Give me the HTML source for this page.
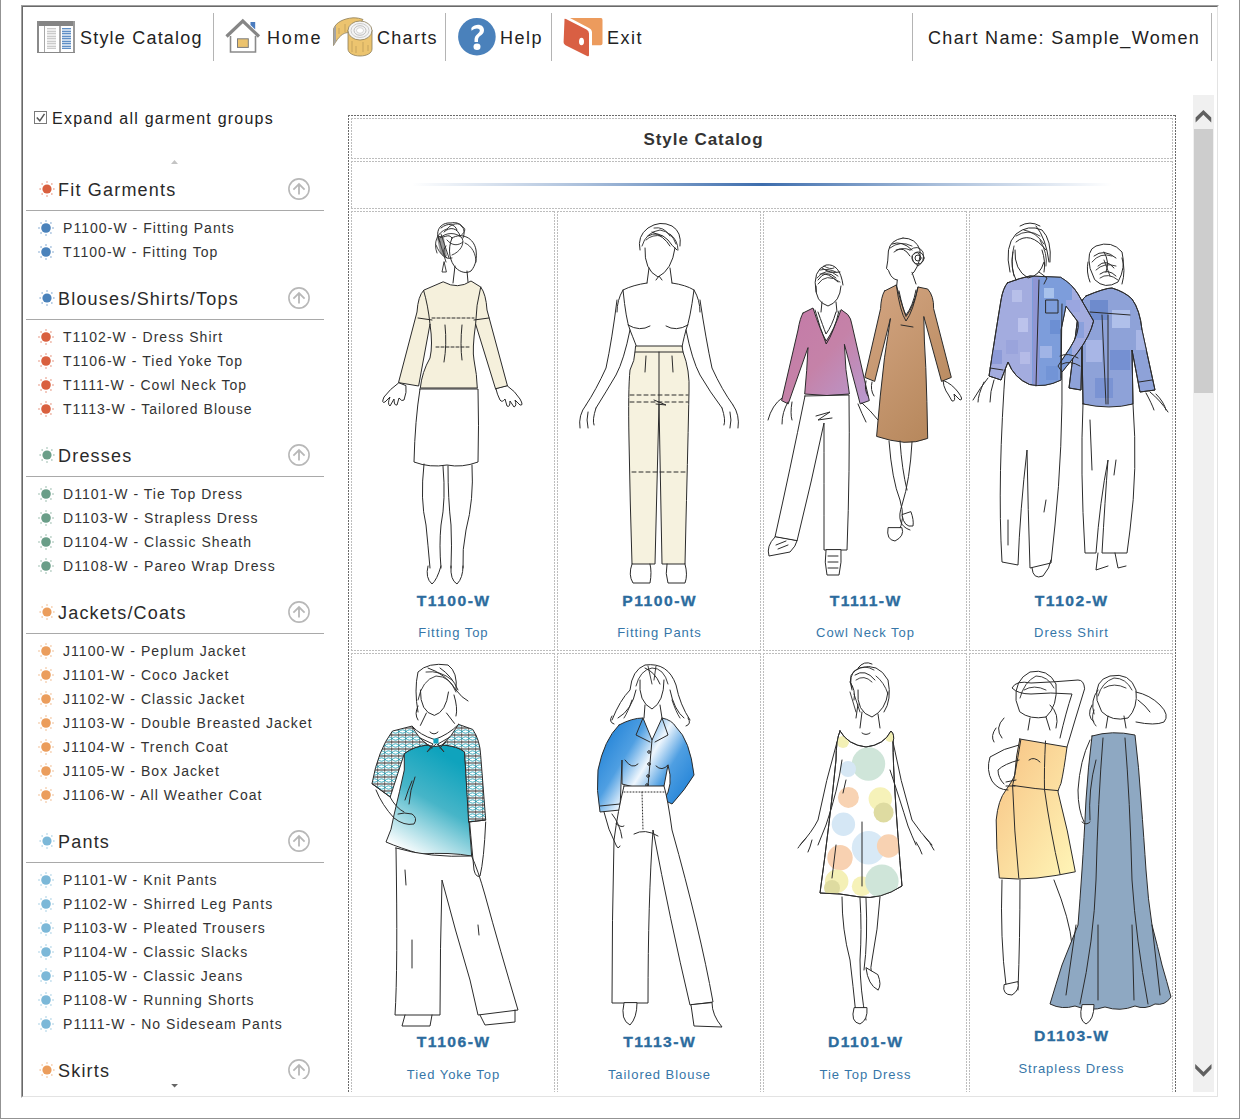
<!DOCTYPE html>
<html><head><meta charset="utf-8">
<style>
*{box-sizing:border-box}
html,body{margin:0;padding:0;width:1240px;height:1119px;overflow:hidden;background:#fff;font-family:"Liberation Sans",sans-serif;color:#222}
.a{position:absolute;white-space:nowrap;line-height:1}
#outer{position:absolute;left:0;top:-1px;width:1240px;height:1120px;border:1px solid #939393;border-top:0}
#inner{position:absolute;left:21px;top:5px;width:1198px;height:1093px;border-top:1px solid #a0a0a0;border-left:1px solid #a0a0a0;border-right:1px solid #fff;border-bottom:1px solid #fff}
#inner2{position:absolute;left:0;top:0;right:0;bottom:0;border-top:1px solid #696969;border-left:1px solid #696969;border-right:1px solid #e3e3e3;border-bottom:1px solid #e3e3e3}
.sep{position:absolute;top:13px;width:1px;height:48px;background:#b4b4b4}
.tb{font-size:18px;top:29px}
.hdr{font-size:18px;letter-spacing:1.2px;color:#2a2a2a}
.it{font-size:14px;letter-spacing:1.05px;color:#333}
.divl{position:absolute;left:26px;width:298px;height:1px;background:#a9a9a9}
.code{font-size:14px;font-weight:bold;color:#2c6c9e;text-align:center;letter-spacing:1.3px;padding-left:1.3px;transform:scaleX(1.12);transform-origin:50% 0;-webkit-text-stroke:0.3px #2c6c9e}
.nm{font-size:13px;color:#3676a8;text-align:center;letter-spacing:0.95px;padding-left:0.95px}
</style></head><body>
<div id="outer"></div>
<div id="inner"><div id="inner2"></div></div>

<!-- toolbar -->
<svg class="abs" style="position:absolute;left:0;top:0" width="1240" height="70" viewBox="0 0 1240 70">
 <!-- style catalog icon -->
 <g shape-rendering="crispEdges">
  <rect x="37" y="21" width="38" height="32" fill="#fff"/>
  <rect x="37" y="21" width="38" height="5" fill="#858585"/>
  <rect x="37" y="21" width="2" height="32" fill="#8a8a8a"/>
  <rect x="73" y="21" width="2" height="32" fill="#9a9a9a"/>
  <rect x="37" y="52" width="38" height="1" fill="#888"/>
  <rect x="44" y="26" width="1" height="26" fill="#a8a8a8"/>
  <rect x="59" y="26" width="2" height="26" fill="#a8a8a8"/>
  <rect x="47" y="28" width="9" height="21" fill="#ececec"/>
  <rect x="62" y="28" width="9" height="21" fill="#c5d7ea"/>
 </g>
 <g fill="#cbcbcb" shape-rendering="crispEdges">
  <rect x="47" y="28" width="9" height="1"/><rect x="47" y="31" width="9" height="1"/><rect x="47" y="33" width="9" height="1"/><rect x="47" y="36" width="9" height="1"/><rect x="47" y="38" width="9" height="1"/><rect x="47" y="41" width="9" height="1"/><rect x="47" y="43" width="9" height="1"/><rect x="47" y="46" width="9" height="1"/><rect x="47" y="48" width="9" height="1"/>
 </g>
 <g fill="#5f8fc6" shape-rendering="crispEdges">
  <rect x="62" y="28" width="9" height="1"/><rect x="62" y="31" width="9" height="1"/><rect x="62" y="33" width="9" height="1"/><rect x="62" y="36" width="9" height="1"/><rect x="62" y="38" width="9" height="1"/><rect x="62" y="41" width="9" height="1"/><rect x="62" y="43" width="9" height="1"/><rect x="62" y="46" width="9" height="1"/><rect x="62" y="48" width="9" height="1"/>
 </g>
 <!-- home -->
 <path d="M250.5 22 H255.2 V29.5 L250.5 25 Z" fill="#4a7cbf"/>
 <path d="M230.5 36 V52 H255.5 V36" fill="#fff" stroke="#8a8a8a" stroke-width="1.6"/>
 <path d="M226.5 36.5 L242.8 21 L259 36.5" fill="none" stroke="#868686" stroke-width="3.2" stroke-linejoin="miter"/>
 <rect x="237.5" y="38.8" width="10.8" height="8.6" fill="#ecc36e" stroke="#7c7c7c" stroke-width="1"/>
 <!-- tape -->
 <path d="M333.5 29 C336 22 344 18.5 353 17.8 C357 17.8 360 18.3 363 19.5 L356 29 C352 31 350 32 347.7 32.6 C343 33 339 36 333.5 45.5 Z" fill="#ecc46f" stroke="#8c7c58" stroke-width="0.8"/><path d="M333.5 29 L336 25.5 L336 41 L333.5 45.5 Z" fill="#a4a4a4"/>
 <path d="M348 30 V49 C348 53 353 56 360 56 C367 56 372 53 372 49 V30 Z" fill="#ecc46f" stroke="#8c7c58" stroke-width="0.8"/>
 <ellipse cx="360" cy="30.5" rx="12" ry="9.5" fill="#f4f4f4" stroke="#8c7c58" stroke-width="0.8"/>
 <ellipse cx="360" cy="30.5" rx="9" ry="7" fill="none" stroke="#c0c0c0" stroke-width="0.8"/>
 <ellipse cx="360" cy="30.5" rx="6" ry="4.8" fill="none" stroke="#b0b0b0" stroke-width="0.8"/>
 <ellipse cx="360" cy="30.5" rx="3.5" ry="2.8" fill="#fff" stroke="#bbb" stroke-width="0.6"/>
 <g stroke="#b89a58" stroke-width="0.7"><path d="M352 41 V52 M356 46 V53 M363 42 V52 M368 45 V51 M339 28 V34 M345 24 V32"/></g>
 <!-- help -->
 <circle cx="476.9" cy="36.7" r="18.8" fill="#4a81bb"/>
 <path d="M471.3 28 C473 25.5 476 24.8 478 24.8 C481.5 24.8 484 27 484 30.2 C484 33 482 34.5 480 36 C478.5 37.2 478 38.5 478 40.5 V42 H474.5 V40 C474.5 37 475.5 35.5 477.5 34 C479 32.8 479.8 31.8 479.8 30.6 C479.8 29.2 478.6 28.4 477 28.4 C475.2 28.4 473.5 29.2 471.5 30.8 Z" fill="#fff"/>
 <ellipse cx="477" cy="46.8" rx="3.5" ry="3.2" fill="#fff"/>
 <!-- exit -->
 <path d="M570 18 H601 Q602.5 18 602.5 20 V43.5 Q602.5 45.3 600.5 45.3 H592 V32.5 Q592 29 588 27.5 Z" fill="#ec9b5d"/>
 <path d="M564.5 19.5 Q564 18.3 566 19 L586.5 29.5 Q589 31 589 33.5 V55 Q589 57 587 56 L567 46 Q563.6 44.5 563.6 42 Z" fill="#d95f43"/>
 <ellipse cx="581.5" cy="41.5" rx="2.5" ry="3.8" fill="#fff"/>
</svg>
<div class="sep" style="left:213px"></div>
<div class="sep" style="left:445px"></div>
<div class="sep" style="left:551px"></div>
<div class="sep" style="left:912px"></div>
<div class="sep" style="left:1211px"></div>
<div class="a tb" style="left:80px;letter-spacing:1.2px">Style Catalog</div>
<div class="a tb" style="left:267px;letter-spacing:1.85px">Home</div>
<div class="a tb" style="left:377px;letter-spacing:1.3px">Charts</div>
<div class="a tb" style="left:500px;letter-spacing:1.5px">Help</div>
<div class="a tb" style="left:607px;letter-spacing:1.5px">Exit</div>
<div class="a tb" style="left:928px;letter-spacing:1.35px">Chart Name: Sample_Women</div>

<!-- left panel -->
<svg style="position:absolute;left:0;top:0" width="340" height="1119" viewBox="0 0 340 1119">
<circle cx="47" cy="189" r="4.6" fill="#d9603f"/><circle cx="53.90" cy="189.00" r="0.75" fill="#d9603f" opacity="0.8"/><circle cx="51.88" cy="193.88" r="0.75" fill="#d9603f" opacity="0.8"/><circle cx="47.00" cy="195.90" r="0.75" fill="#d9603f" opacity="0.8"/><circle cx="42.12" cy="193.88" r="0.75" fill="#d9603f" opacity="0.8"/><circle cx="40.10" cy="189.00" r="0.75" fill="#d9603f" opacity="0.8"/><circle cx="42.12" cy="184.12" r="0.75" fill="#d9603f" opacity="0.8"/><circle cx="47.00" cy="182.10" r="0.75" fill="#d9603f" opacity="0.8"/><circle cx="51.88" cy="184.12" r="0.75" fill="#d9603f" opacity="0.8"/>
<circle cx="299" cy="189" r="10.1" fill="none" stroke="#b8b8b8" stroke-width="1.6"/><path d="M299 194.6 V184 M293.4 189.6 L299 184 L304.6 189.6" transform="translate(0,0)" fill="none" stroke="#b8b8b8" stroke-width="1.8"/>
<rect x="26" y="210" width="298" height="1" fill="#a9a9a9"/>
<circle cx="46" cy="228" r="4.8" fill="#4a82bb"/><circle cx="53.00" cy="228.00" r="0.75" fill="#4a82bb" opacity="0.8"/><circle cx="50.95" cy="232.95" r="0.75" fill="#4a82bb" opacity="0.8"/><circle cx="46.00" cy="235.00" r="0.75" fill="#4a82bb" opacity="0.8"/><circle cx="41.05" cy="232.95" r="0.75" fill="#4a82bb" opacity="0.8"/><circle cx="39.00" cy="228.00" r="0.75" fill="#4a82bb" opacity="0.8"/><circle cx="41.05" cy="223.05" r="0.75" fill="#4a82bb" opacity="0.8"/><circle cx="46.00" cy="221.00" r="0.75" fill="#4a82bb" opacity="0.8"/><circle cx="50.95" cy="223.05" r="0.75" fill="#4a82bb" opacity="0.8"/>
<circle cx="46" cy="252" r="4.8" fill="#4a82bb"/><circle cx="53.00" cy="252.00" r="0.75" fill="#4a82bb" opacity="0.8"/><circle cx="50.95" cy="256.95" r="0.75" fill="#4a82bb" opacity="0.8"/><circle cx="46.00" cy="259.00" r="0.75" fill="#4a82bb" opacity="0.8"/><circle cx="41.05" cy="256.95" r="0.75" fill="#4a82bb" opacity="0.8"/><circle cx="39.00" cy="252.00" r="0.75" fill="#4a82bb" opacity="0.8"/><circle cx="41.05" cy="247.05" r="0.75" fill="#4a82bb" opacity="0.8"/><circle cx="46.00" cy="245.00" r="0.75" fill="#4a82bb" opacity="0.8"/><circle cx="50.95" cy="247.05" r="0.75" fill="#4a82bb" opacity="0.8"/>
<circle cx="47" cy="298" r="4.6" fill="#4a82bb"/><circle cx="53.90" cy="298.00" r="0.75" fill="#4a82bb" opacity="0.8"/><circle cx="51.88" cy="302.88" r="0.75" fill="#4a82bb" opacity="0.8"/><circle cx="47.00" cy="304.90" r="0.75" fill="#4a82bb" opacity="0.8"/><circle cx="42.12" cy="302.88" r="0.75" fill="#4a82bb" opacity="0.8"/><circle cx="40.10" cy="298.00" r="0.75" fill="#4a82bb" opacity="0.8"/><circle cx="42.12" cy="293.12" r="0.75" fill="#4a82bb" opacity="0.8"/><circle cx="47.00" cy="291.10" r="0.75" fill="#4a82bb" opacity="0.8"/><circle cx="51.88" cy="293.12" r="0.75" fill="#4a82bb" opacity="0.8"/>
<circle cx="299" cy="298" r="10.1" fill="none" stroke="#b8b8b8" stroke-width="1.6"/><path d="M299 194.6 V184 M293.4 189.6 L299 184 L304.6 189.6" transform="translate(0,109)" fill="none" stroke="#b8b8b8" stroke-width="1.8"/>
<rect x="26" y="319" width="298" height="1" fill="#a9a9a9"/>
<circle cx="46" cy="337" r="4.8" fill="#d9603f"/><circle cx="53.00" cy="337.00" r="0.75" fill="#d9603f" opacity="0.8"/><circle cx="50.95" cy="341.95" r="0.75" fill="#d9603f" opacity="0.8"/><circle cx="46.00" cy="344.00" r="0.75" fill="#d9603f" opacity="0.8"/><circle cx="41.05" cy="341.95" r="0.75" fill="#d9603f" opacity="0.8"/><circle cx="39.00" cy="337.00" r="0.75" fill="#d9603f" opacity="0.8"/><circle cx="41.05" cy="332.05" r="0.75" fill="#d9603f" opacity="0.8"/><circle cx="46.00" cy="330.00" r="0.75" fill="#d9603f" opacity="0.8"/><circle cx="50.95" cy="332.05" r="0.75" fill="#d9603f" opacity="0.8"/>
<circle cx="46" cy="361" r="4.8" fill="#d9603f"/><circle cx="53.00" cy="361.00" r="0.75" fill="#d9603f" opacity="0.8"/><circle cx="50.95" cy="365.95" r="0.75" fill="#d9603f" opacity="0.8"/><circle cx="46.00" cy="368.00" r="0.75" fill="#d9603f" opacity="0.8"/><circle cx="41.05" cy="365.95" r="0.75" fill="#d9603f" opacity="0.8"/><circle cx="39.00" cy="361.00" r="0.75" fill="#d9603f" opacity="0.8"/><circle cx="41.05" cy="356.05" r="0.75" fill="#d9603f" opacity="0.8"/><circle cx="46.00" cy="354.00" r="0.75" fill="#d9603f" opacity="0.8"/><circle cx="50.95" cy="356.05" r="0.75" fill="#d9603f" opacity="0.8"/>
<circle cx="46" cy="385" r="4.8" fill="#d9603f"/><circle cx="53.00" cy="385.00" r="0.75" fill="#d9603f" opacity="0.8"/><circle cx="50.95" cy="389.95" r="0.75" fill="#d9603f" opacity="0.8"/><circle cx="46.00" cy="392.00" r="0.75" fill="#d9603f" opacity="0.8"/><circle cx="41.05" cy="389.95" r="0.75" fill="#d9603f" opacity="0.8"/><circle cx="39.00" cy="385.00" r="0.75" fill="#d9603f" opacity="0.8"/><circle cx="41.05" cy="380.05" r="0.75" fill="#d9603f" opacity="0.8"/><circle cx="46.00" cy="378.00" r="0.75" fill="#d9603f" opacity="0.8"/><circle cx="50.95" cy="380.05" r="0.75" fill="#d9603f" opacity="0.8"/>
<circle cx="46" cy="409" r="4.8" fill="#d9603f"/><circle cx="53.00" cy="409.00" r="0.75" fill="#d9603f" opacity="0.8"/><circle cx="50.95" cy="413.95" r="0.75" fill="#d9603f" opacity="0.8"/><circle cx="46.00" cy="416.00" r="0.75" fill="#d9603f" opacity="0.8"/><circle cx="41.05" cy="413.95" r="0.75" fill="#d9603f" opacity="0.8"/><circle cx="39.00" cy="409.00" r="0.75" fill="#d9603f" opacity="0.8"/><circle cx="41.05" cy="404.05" r="0.75" fill="#d9603f" opacity="0.8"/><circle cx="46.00" cy="402.00" r="0.75" fill="#d9603f" opacity="0.8"/><circle cx="50.95" cy="404.05" r="0.75" fill="#d9603f" opacity="0.8"/>
<circle cx="47" cy="455" r="4.6" fill="#6a9e88"/><circle cx="53.90" cy="455.00" r="0.75" fill="#6a9e88" opacity="0.8"/><circle cx="51.88" cy="459.88" r="0.75" fill="#6a9e88" opacity="0.8"/><circle cx="47.00" cy="461.90" r="0.75" fill="#6a9e88" opacity="0.8"/><circle cx="42.12" cy="459.88" r="0.75" fill="#6a9e88" opacity="0.8"/><circle cx="40.10" cy="455.00" r="0.75" fill="#6a9e88" opacity="0.8"/><circle cx="42.12" cy="450.12" r="0.75" fill="#6a9e88" opacity="0.8"/><circle cx="47.00" cy="448.10" r="0.75" fill="#6a9e88" opacity="0.8"/><circle cx="51.88" cy="450.12" r="0.75" fill="#6a9e88" opacity="0.8"/>
<circle cx="299" cy="455" r="10.1" fill="none" stroke="#b8b8b8" stroke-width="1.6"/><path d="M299 194.6 V184 M293.4 189.6 L299 184 L304.6 189.6" transform="translate(0,266)" fill="none" stroke="#b8b8b8" stroke-width="1.8"/>
<rect x="26" y="476" width="298" height="1" fill="#a9a9a9"/>
<circle cx="46" cy="494" r="4.8" fill="#6a9e88"/><circle cx="53.00" cy="494.00" r="0.75" fill="#6a9e88" opacity="0.8"/><circle cx="50.95" cy="498.95" r="0.75" fill="#6a9e88" opacity="0.8"/><circle cx="46.00" cy="501.00" r="0.75" fill="#6a9e88" opacity="0.8"/><circle cx="41.05" cy="498.95" r="0.75" fill="#6a9e88" opacity="0.8"/><circle cx="39.00" cy="494.00" r="0.75" fill="#6a9e88" opacity="0.8"/><circle cx="41.05" cy="489.05" r="0.75" fill="#6a9e88" opacity="0.8"/><circle cx="46.00" cy="487.00" r="0.75" fill="#6a9e88" opacity="0.8"/><circle cx="50.95" cy="489.05" r="0.75" fill="#6a9e88" opacity="0.8"/>
<circle cx="46" cy="518" r="4.8" fill="#6a9e88"/><circle cx="53.00" cy="518.00" r="0.75" fill="#6a9e88" opacity="0.8"/><circle cx="50.95" cy="522.95" r="0.75" fill="#6a9e88" opacity="0.8"/><circle cx="46.00" cy="525.00" r="0.75" fill="#6a9e88" opacity="0.8"/><circle cx="41.05" cy="522.95" r="0.75" fill="#6a9e88" opacity="0.8"/><circle cx="39.00" cy="518.00" r="0.75" fill="#6a9e88" opacity="0.8"/><circle cx="41.05" cy="513.05" r="0.75" fill="#6a9e88" opacity="0.8"/><circle cx="46.00" cy="511.00" r="0.75" fill="#6a9e88" opacity="0.8"/><circle cx="50.95" cy="513.05" r="0.75" fill="#6a9e88" opacity="0.8"/>
<circle cx="46" cy="542" r="4.8" fill="#6a9e88"/><circle cx="53.00" cy="542.00" r="0.75" fill="#6a9e88" opacity="0.8"/><circle cx="50.95" cy="546.95" r="0.75" fill="#6a9e88" opacity="0.8"/><circle cx="46.00" cy="549.00" r="0.75" fill="#6a9e88" opacity="0.8"/><circle cx="41.05" cy="546.95" r="0.75" fill="#6a9e88" opacity="0.8"/><circle cx="39.00" cy="542.00" r="0.75" fill="#6a9e88" opacity="0.8"/><circle cx="41.05" cy="537.05" r="0.75" fill="#6a9e88" opacity="0.8"/><circle cx="46.00" cy="535.00" r="0.75" fill="#6a9e88" opacity="0.8"/><circle cx="50.95" cy="537.05" r="0.75" fill="#6a9e88" opacity="0.8"/>
<circle cx="46" cy="566" r="4.8" fill="#6a9e88"/><circle cx="53.00" cy="566.00" r="0.75" fill="#6a9e88" opacity="0.8"/><circle cx="50.95" cy="570.95" r="0.75" fill="#6a9e88" opacity="0.8"/><circle cx="46.00" cy="573.00" r="0.75" fill="#6a9e88" opacity="0.8"/><circle cx="41.05" cy="570.95" r="0.75" fill="#6a9e88" opacity="0.8"/><circle cx="39.00" cy="566.00" r="0.75" fill="#6a9e88" opacity="0.8"/><circle cx="41.05" cy="561.05" r="0.75" fill="#6a9e88" opacity="0.8"/><circle cx="46.00" cy="559.00" r="0.75" fill="#6a9e88" opacity="0.8"/><circle cx="50.95" cy="561.05" r="0.75" fill="#6a9e88" opacity="0.8"/>
<circle cx="47" cy="612" r="4.6" fill="#eb9d5c"/><circle cx="53.90" cy="612.00" r="0.75" fill="#eb9d5c" opacity="0.8"/><circle cx="51.88" cy="616.88" r="0.75" fill="#eb9d5c" opacity="0.8"/><circle cx="47.00" cy="618.90" r="0.75" fill="#eb9d5c" opacity="0.8"/><circle cx="42.12" cy="616.88" r="0.75" fill="#eb9d5c" opacity="0.8"/><circle cx="40.10" cy="612.00" r="0.75" fill="#eb9d5c" opacity="0.8"/><circle cx="42.12" cy="607.12" r="0.75" fill="#eb9d5c" opacity="0.8"/><circle cx="47.00" cy="605.10" r="0.75" fill="#eb9d5c" opacity="0.8"/><circle cx="51.88" cy="607.12" r="0.75" fill="#eb9d5c" opacity="0.8"/>
<circle cx="299" cy="612" r="10.1" fill="none" stroke="#b8b8b8" stroke-width="1.6"/><path d="M299 194.6 V184 M293.4 189.6 L299 184 L304.6 189.6" transform="translate(0,423)" fill="none" stroke="#b8b8b8" stroke-width="1.8"/>
<rect x="26" y="633" width="298" height="1" fill="#a9a9a9"/>
<circle cx="46" cy="651" r="4.8" fill="#eb9d5c"/><circle cx="53.00" cy="651.00" r="0.75" fill="#eb9d5c" opacity="0.8"/><circle cx="50.95" cy="655.95" r="0.75" fill="#eb9d5c" opacity="0.8"/><circle cx="46.00" cy="658.00" r="0.75" fill="#eb9d5c" opacity="0.8"/><circle cx="41.05" cy="655.95" r="0.75" fill="#eb9d5c" opacity="0.8"/><circle cx="39.00" cy="651.00" r="0.75" fill="#eb9d5c" opacity="0.8"/><circle cx="41.05" cy="646.05" r="0.75" fill="#eb9d5c" opacity="0.8"/><circle cx="46.00" cy="644.00" r="0.75" fill="#eb9d5c" opacity="0.8"/><circle cx="50.95" cy="646.05" r="0.75" fill="#eb9d5c" opacity="0.8"/>
<circle cx="46" cy="675" r="4.8" fill="#eb9d5c"/><circle cx="53.00" cy="675.00" r="0.75" fill="#eb9d5c" opacity="0.8"/><circle cx="50.95" cy="679.95" r="0.75" fill="#eb9d5c" opacity="0.8"/><circle cx="46.00" cy="682.00" r="0.75" fill="#eb9d5c" opacity="0.8"/><circle cx="41.05" cy="679.95" r="0.75" fill="#eb9d5c" opacity="0.8"/><circle cx="39.00" cy="675.00" r="0.75" fill="#eb9d5c" opacity="0.8"/><circle cx="41.05" cy="670.05" r="0.75" fill="#eb9d5c" opacity="0.8"/><circle cx="46.00" cy="668.00" r="0.75" fill="#eb9d5c" opacity="0.8"/><circle cx="50.95" cy="670.05" r="0.75" fill="#eb9d5c" opacity="0.8"/>
<circle cx="46" cy="699" r="4.8" fill="#eb9d5c"/><circle cx="53.00" cy="699.00" r="0.75" fill="#eb9d5c" opacity="0.8"/><circle cx="50.95" cy="703.95" r="0.75" fill="#eb9d5c" opacity="0.8"/><circle cx="46.00" cy="706.00" r="0.75" fill="#eb9d5c" opacity="0.8"/><circle cx="41.05" cy="703.95" r="0.75" fill="#eb9d5c" opacity="0.8"/><circle cx="39.00" cy="699.00" r="0.75" fill="#eb9d5c" opacity="0.8"/><circle cx="41.05" cy="694.05" r="0.75" fill="#eb9d5c" opacity="0.8"/><circle cx="46.00" cy="692.00" r="0.75" fill="#eb9d5c" opacity="0.8"/><circle cx="50.95" cy="694.05" r="0.75" fill="#eb9d5c" opacity="0.8"/>
<circle cx="46" cy="723" r="4.8" fill="#eb9d5c"/><circle cx="53.00" cy="723.00" r="0.75" fill="#eb9d5c" opacity="0.8"/><circle cx="50.95" cy="727.95" r="0.75" fill="#eb9d5c" opacity="0.8"/><circle cx="46.00" cy="730.00" r="0.75" fill="#eb9d5c" opacity="0.8"/><circle cx="41.05" cy="727.95" r="0.75" fill="#eb9d5c" opacity="0.8"/><circle cx="39.00" cy="723.00" r="0.75" fill="#eb9d5c" opacity="0.8"/><circle cx="41.05" cy="718.05" r="0.75" fill="#eb9d5c" opacity="0.8"/><circle cx="46.00" cy="716.00" r="0.75" fill="#eb9d5c" opacity="0.8"/><circle cx="50.95" cy="718.05" r="0.75" fill="#eb9d5c" opacity="0.8"/>
<circle cx="46" cy="747" r="4.8" fill="#eb9d5c"/><circle cx="53.00" cy="747.00" r="0.75" fill="#eb9d5c" opacity="0.8"/><circle cx="50.95" cy="751.95" r="0.75" fill="#eb9d5c" opacity="0.8"/><circle cx="46.00" cy="754.00" r="0.75" fill="#eb9d5c" opacity="0.8"/><circle cx="41.05" cy="751.95" r="0.75" fill="#eb9d5c" opacity="0.8"/><circle cx="39.00" cy="747.00" r="0.75" fill="#eb9d5c" opacity="0.8"/><circle cx="41.05" cy="742.05" r="0.75" fill="#eb9d5c" opacity="0.8"/><circle cx="46.00" cy="740.00" r="0.75" fill="#eb9d5c" opacity="0.8"/><circle cx="50.95" cy="742.05" r="0.75" fill="#eb9d5c" opacity="0.8"/>
<circle cx="46" cy="771" r="4.8" fill="#eb9d5c"/><circle cx="53.00" cy="771.00" r="0.75" fill="#eb9d5c" opacity="0.8"/><circle cx="50.95" cy="775.95" r="0.75" fill="#eb9d5c" opacity="0.8"/><circle cx="46.00" cy="778.00" r="0.75" fill="#eb9d5c" opacity="0.8"/><circle cx="41.05" cy="775.95" r="0.75" fill="#eb9d5c" opacity="0.8"/><circle cx="39.00" cy="771.00" r="0.75" fill="#eb9d5c" opacity="0.8"/><circle cx="41.05" cy="766.05" r="0.75" fill="#eb9d5c" opacity="0.8"/><circle cx="46.00" cy="764.00" r="0.75" fill="#eb9d5c" opacity="0.8"/><circle cx="50.95" cy="766.05" r="0.75" fill="#eb9d5c" opacity="0.8"/>
<circle cx="46" cy="795" r="4.8" fill="#eb9d5c"/><circle cx="53.00" cy="795.00" r="0.75" fill="#eb9d5c" opacity="0.8"/><circle cx="50.95" cy="799.95" r="0.75" fill="#eb9d5c" opacity="0.8"/><circle cx="46.00" cy="802.00" r="0.75" fill="#eb9d5c" opacity="0.8"/><circle cx="41.05" cy="799.95" r="0.75" fill="#eb9d5c" opacity="0.8"/><circle cx="39.00" cy="795.00" r="0.75" fill="#eb9d5c" opacity="0.8"/><circle cx="41.05" cy="790.05" r="0.75" fill="#eb9d5c" opacity="0.8"/><circle cx="46.00" cy="788.00" r="0.75" fill="#eb9d5c" opacity="0.8"/><circle cx="50.95" cy="790.05" r="0.75" fill="#eb9d5c" opacity="0.8"/>
<circle cx="47" cy="841" r="4.6" fill="#7cb8d8"/><circle cx="53.90" cy="841.00" r="0.75" fill="#7cb8d8" opacity="0.8"/><circle cx="51.88" cy="845.88" r="0.75" fill="#7cb8d8" opacity="0.8"/><circle cx="47.00" cy="847.90" r="0.75" fill="#7cb8d8" opacity="0.8"/><circle cx="42.12" cy="845.88" r="0.75" fill="#7cb8d8" opacity="0.8"/><circle cx="40.10" cy="841.00" r="0.75" fill="#7cb8d8" opacity="0.8"/><circle cx="42.12" cy="836.12" r="0.75" fill="#7cb8d8" opacity="0.8"/><circle cx="47.00" cy="834.10" r="0.75" fill="#7cb8d8" opacity="0.8"/><circle cx="51.88" cy="836.12" r="0.75" fill="#7cb8d8" opacity="0.8"/>
<circle cx="299" cy="841" r="10.1" fill="none" stroke="#b8b8b8" stroke-width="1.6"/><path d="M299 194.6 V184 M293.4 189.6 L299 184 L304.6 189.6" transform="translate(0,652)" fill="none" stroke="#b8b8b8" stroke-width="1.8"/>
<rect x="26" y="862" width="298" height="1" fill="#a9a9a9"/>
<circle cx="46" cy="880" r="4.8" fill="#7cb8d8"/><circle cx="53.00" cy="880.00" r="0.75" fill="#7cb8d8" opacity="0.8"/><circle cx="50.95" cy="884.95" r="0.75" fill="#7cb8d8" opacity="0.8"/><circle cx="46.00" cy="887.00" r="0.75" fill="#7cb8d8" opacity="0.8"/><circle cx="41.05" cy="884.95" r="0.75" fill="#7cb8d8" opacity="0.8"/><circle cx="39.00" cy="880.00" r="0.75" fill="#7cb8d8" opacity="0.8"/><circle cx="41.05" cy="875.05" r="0.75" fill="#7cb8d8" opacity="0.8"/><circle cx="46.00" cy="873.00" r="0.75" fill="#7cb8d8" opacity="0.8"/><circle cx="50.95" cy="875.05" r="0.75" fill="#7cb8d8" opacity="0.8"/>
<circle cx="46" cy="904" r="4.8" fill="#7cb8d8"/><circle cx="53.00" cy="904.00" r="0.75" fill="#7cb8d8" opacity="0.8"/><circle cx="50.95" cy="908.95" r="0.75" fill="#7cb8d8" opacity="0.8"/><circle cx="46.00" cy="911.00" r="0.75" fill="#7cb8d8" opacity="0.8"/><circle cx="41.05" cy="908.95" r="0.75" fill="#7cb8d8" opacity="0.8"/><circle cx="39.00" cy="904.00" r="0.75" fill="#7cb8d8" opacity="0.8"/><circle cx="41.05" cy="899.05" r="0.75" fill="#7cb8d8" opacity="0.8"/><circle cx="46.00" cy="897.00" r="0.75" fill="#7cb8d8" opacity="0.8"/><circle cx="50.95" cy="899.05" r="0.75" fill="#7cb8d8" opacity="0.8"/>
<circle cx="46" cy="928" r="4.8" fill="#7cb8d8"/><circle cx="53.00" cy="928.00" r="0.75" fill="#7cb8d8" opacity="0.8"/><circle cx="50.95" cy="932.95" r="0.75" fill="#7cb8d8" opacity="0.8"/><circle cx="46.00" cy="935.00" r="0.75" fill="#7cb8d8" opacity="0.8"/><circle cx="41.05" cy="932.95" r="0.75" fill="#7cb8d8" opacity="0.8"/><circle cx="39.00" cy="928.00" r="0.75" fill="#7cb8d8" opacity="0.8"/><circle cx="41.05" cy="923.05" r="0.75" fill="#7cb8d8" opacity="0.8"/><circle cx="46.00" cy="921.00" r="0.75" fill="#7cb8d8" opacity="0.8"/><circle cx="50.95" cy="923.05" r="0.75" fill="#7cb8d8" opacity="0.8"/>
<circle cx="46" cy="952" r="4.8" fill="#7cb8d8"/><circle cx="53.00" cy="952.00" r="0.75" fill="#7cb8d8" opacity="0.8"/><circle cx="50.95" cy="956.95" r="0.75" fill="#7cb8d8" opacity="0.8"/><circle cx="46.00" cy="959.00" r="0.75" fill="#7cb8d8" opacity="0.8"/><circle cx="41.05" cy="956.95" r="0.75" fill="#7cb8d8" opacity="0.8"/><circle cx="39.00" cy="952.00" r="0.75" fill="#7cb8d8" opacity="0.8"/><circle cx="41.05" cy="947.05" r="0.75" fill="#7cb8d8" opacity="0.8"/><circle cx="46.00" cy="945.00" r="0.75" fill="#7cb8d8" opacity="0.8"/><circle cx="50.95" cy="947.05" r="0.75" fill="#7cb8d8" opacity="0.8"/>
<circle cx="46" cy="976" r="4.8" fill="#7cb8d8"/><circle cx="53.00" cy="976.00" r="0.75" fill="#7cb8d8" opacity="0.8"/><circle cx="50.95" cy="980.95" r="0.75" fill="#7cb8d8" opacity="0.8"/><circle cx="46.00" cy="983.00" r="0.75" fill="#7cb8d8" opacity="0.8"/><circle cx="41.05" cy="980.95" r="0.75" fill="#7cb8d8" opacity="0.8"/><circle cx="39.00" cy="976.00" r="0.75" fill="#7cb8d8" opacity="0.8"/><circle cx="41.05" cy="971.05" r="0.75" fill="#7cb8d8" opacity="0.8"/><circle cx="46.00" cy="969.00" r="0.75" fill="#7cb8d8" opacity="0.8"/><circle cx="50.95" cy="971.05" r="0.75" fill="#7cb8d8" opacity="0.8"/>
<circle cx="46" cy="1000" r="4.8" fill="#7cb8d8"/><circle cx="53.00" cy="1000.00" r="0.75" fill="#7cb8d8" opacity="0.8"/><circle cx="50.95" cy="1004.95" r="0.75" fill="#7cb8d8" opacity="0.8"/><circle cx="46.00" cy="1007.00" r="0.75" fill="#7cb8d8" opacity="0.8"/><circle cx="41.05" cy="1004.95" r="0.75" fill="#7cb8d8" opacity="0.8"/><circle cx="39.00" cy="1000.00" r="0.75" fill="#7cb8d8" opacity="0.8"/><circle cx="41.05" cy="995.05" r="0.75" fill="#7cb8d8" opacity="0.8"/><circle cx="46.00" cy="993.00" r="0.75" fill="#7cb8d8" opacity="0.8"/><circle cx="50.95" cy="995.05" r="0.75" fill="#7cb8d8" opacity="0.8"/>
<circle cx="46" cy="1024" r="4.8" fill="#7cb8d8"/><circle cx="53.00" cy="1024.00" r="0.75" fill="#7cb8d8" opacity="0.8"/><circle cx="50.95" cy="1028.95" r="0.75" fill="#7cb8d8" opacity="0.8"/><circle cx="46.00" cy="1031.00" r="0.75" fill="#7cb8d8" opacity="0.8"/><circle cx="41.05" cy="1028.95" r="0.75" fill="#7cb8d8" opacity="0.8"/><circle cx="39.00" cy="1024.00" r="0.75" fill="#7cb8d8" opacity="0.8"/><circle cx="41.05" cy="1019.05" r="0.75" fill="#7cb8d8" opacity="0.8"/><circle cx="46.00" cy="1017.00" r="0.75" fill="#7cb8d8" opacity="0.8"/><circle cx="50.95" cy="1019.05" r="0.75" fill="#7cb8d8" opacity="0.8"/>
<circle cx="47" cy="1070" r="4.6" fill="#eb9d5c"/><circle cx="53.90" cy="1070.00" r="0.75" fill="#eb9d5c" opacity="0.8"/><circle cx="51.88" cy="1074.88" r="0.75" fill="#eb9d5c" opacity="0.8"/><circle cx="47.00" cy="1076.90" r="0.75" fill="#eb9d5c" opacity="0.8"/><circle cx="42.12" cy="1074.88" r="0.75" fill="#eb9d5c" opacity="0.8"/><circle cx="40.10" cy="1070.00" r="0.75" fill="#eb9d5c" opacity="0.8"/><circle cx="42.12" cy="1065.12" r="0.75" fill="#eb9d5c" opacity="0.8"/><circle cx="47.00" cy="1063.10" r="0.75" fill="#eb9d5c" opacity="0.8"/><circle cx="51.88" cy="1065.12" r="0.75" fill="#eb9d5c" opacity="0.8"/>
<circle cx="299" cy="1070" r="10.1" fill="none" stroke="#b8b8b8" stroke-width="1.6"/><path d="M299 194.6 V184 M293.4 189.6 L299 184 L304.6 189.6" transform="translate(0,881)" fill="none" stroke="#b8b8b8" stroke-width="1.8"/>
<path d="M171 164 L174.5 160 L178 164 Z" fill="#c4c4c4"/>
<rect x="280" y="1079" width="40" height="5" fill="#fff"/><path d="M171.2 1084 L178 1084 L174.6 1087.6 Z" fill="#666"/>
<rect x="34.5" y="111.5" width="12" height="12" fill="#fff" stroke="#7a7a7a" stroke-width="1"/><path d="M36.8 117.5 L39.8 120.8 L44.5 113.8" fill="none" stroke="#555" stroke-width="1.5"/>
</svg>
<div class="a hdr" style="left:58px;top:181px">Fit Garments</div>
<div class="a it" style="left:63px;top:221px">P1100-W - Fitting Pants</div>
<div class="a it" style="left:63px;top:245px">T1100-W - Fitting Top</div>
<div class="a hdr" style="left:58px;top:290px">Blouses/Shirts/Tops</div>
<div class="a it" style="left:63px;top:330px">T1102-W - Dress Shirt</div>
<div class="a it" style="left:63px;top:354px">T1106-W - Tied Yoke Top</div>
<div class="a it" style="left:63px;top:378px">T1111-W - Cowl Neck Top</div>
<div class="a it" style="left:63px;top:402px">T1113-W - Tailored Blouse</div>
<div class="a hdr" style="left:58px;top:447px">Dresses</div>
<div class="a it" style="left:63px;top:487px">D1101-W - Tie Top Dress</div>
<div class="a it" style="left:63px;top:511px">D1103-W - Strapless Dress</div>
<div class="a it" style="left:63px;top:535px">D1104-W - Classic Sheath</div>
<div class="a it" style="left:63px;top:559px">D1108-W - Pareo Wrap Dress</div>
<div class="a hdr" style="left:58px;top:604px">Jackets/Coats</div>
<div class="a it" style="left:63px;top:644px">J1100-W - Peplum Jacket</div>
<div class="a it" style="left:63px;top:668px">J1101-W - Coco Jacket</div>
<div class="a it" style="left:63px;top:692px">J1102-W - Classic Jacket</div>
<div class="a it" style="left:63px;top:716px">J1103-W - Double Breasted Jacket</div>
<div class="a it" style="left:63px;top:740px">J1104-W - Trench Coat</div>
<div class="a it" style="left:63px;top:764px">J1105-W - Box Jacket</div>
<div class="a it" style="left:63px;top:788px">J1106-W - All Weather Coat</div>
<div class="a hdr" style="left:58px;top:833px">Pants</div>
<div class="a it" style="left:63px;top:873px">P1101-W - Knit Pants</div>
<div class="a it" style="left:63px;top:897px">P1102-W - Shirred Leg Pants</div>
<div class="a it" style="left:63px;top:921px">P1103-W - Pleated Trousers</div>
<div class="a it" style="left:63px;top:945px">P1104-W - Classic Slacks</div>
<div class="a it" style="left:63px;top:969px">P1105-W - Classic Jeans</div>
<div class="a it" style="left:63px;top:993px">P1108-W - Running Shorts</div>
<div class="a it" style="left:63px;top:1017px">P1111-W - No Sideseam Pants</div>
<div class="a hdr" style="left:58px;top:1062px">Skirts</div>
<div class="a" style="left:52px;top:111px;font-size:16px;letter-spacing:1.23px">Expand all garment groups</div>
<!-- catalog -->
<div style="position:absolute;left:340px;top:95px;width:853px;height:997px;overflow:hidden">
<div style="position:absolute;left:-340px;top:-95px;width:1240px;height:1200px">
<svg style="position:absolute;left:0;top:0" width="1240" height="1200" viewBox="0 0 1240 1200" shape-rendering="crispEdges">
<line x1="348" y1="115.5" x2="1176" y2="115.5" stroke="#6a6a6a" stroke-width="1" stroke-dasharray="2 1"/><line x1="348.5" y1="115" x2="348.5" y2="1201" stroke="#6a6a6a" stroke-width="1" stroke-dasharray="2 1"/><line x1="1175.5" y1="115" x2="1175.5" y2="1201" stroke="#6a6a6a" stroke-width="1" stroke-dasharray="2 1"/>
<line x1="351" y1="118.5" x2="1173" y2="118.5" stroke="#bdbdbd" stroke-width="1" stroke-dasharray="2 1"/><line x1="351.5" y1="118" x2="351.5" y2="159" stroke="#bdbdbd" stroke-width="1" stroke-dasharray="2 1"/><line x1="1172.5" y1="118" x2="1172.5" y2="159" stroke="#bdbdbd" stroke-width="1" stroke-dasharray="2 1"/><line x1="351" y1="158.5" x2="1173" y2="158.5" stroke="#bdbdbd" stroke-width="1" stroke-dasharray="2 1"/>
<line x1="351" y1="161.5" x2="1173" y2="161.5" stroke="#bdbdbd" stroke-width="1" stroke-dasharray="2 1"/><line x1="351.5" y1="161" x2="351.5" y2="209" stroke="#bdbdbd" stroke-width="1" stroke-dasharray="2 1"/><line x1="1172.5" y1="161" x2="1172.5" y2="209" stroke="#bdbdbd" stroke-width="1" stroke-dasharray="2 1"/><line x1="351" y1="208.5" x2="1173" y2="208.5" stroke="#bdbdbd" stroke-width="1" stroke-dasharray="2 1"/>
<line x1="351" y1="211.5" x2="555" y2="211.5" stroke="#bdbdbd" stroke-width="1" stroke-dasharray="2 1"/><line x1="351.5" y1="211" x2="351.5" y2="651" stroke="#bdbdbd" stroke-width="1" stroke-dasharray="2 1"/><line x1="554.5" y1="211" x2="554.5" y2="651" stroke="#bdbdbd" stroke-width="1" stroke-dasharray="2 1"/><line x1="351" y1="650.5" x2="555" y2="650.5" stroke="#bdbdbd" stroke-width="1" stroke-dasharray="2 1"/>
<line x1="351" y1="653.5" x2="555" y2="653.5" stroke="#bdbdbd" stroke-width="1" stroke-dasharray="2 1"/><line x1="351.5" y1="653" x2="351.5" y2="1201" stroke="#bdbdbd" stroke-width="1" stroke-dasharray="2 1"/><line x1="554.5" y1="653" x2="554.5" y2="1201" stroke="#bdbdbd" stroke-width="1" stroke-dasharray="2 1"/>
<line x1="557" y1="211.5" x2="761" y2="211.5" stroke="#bdbdbd" stroke-width="1" stroke-dasharray="2 1"/><line x1="557.5" y1="211" x2="557.5" y2="651" stroke="#bdbdbd" stroke-width="1" stroke-dasharray="2 1"/><line x1="760.5" y1="211" x2="760.5" y2="651" stroke="#bdbdbd" stroke-width="1" stroke-dasharray="2 1"/><line x1="557" y1="650.5" x2="761" y2="650.5" stroke="#bdbdbd" stroke-width="1" stroke-dasharray="2 1"/>
<line x1="557" y1="653.5" x2="761" y2="653.5" stroke="#bdbdbd" stroke-width="1" stroke-dasharray="2 1"/><line x1="557.5" y1="653" x2="557.5" y2="1201" stroke="#bdbdbd" stroke-width="1" stroke-dasharray="2 1"/><line x1="760.5" y1="653" x2="760.5" y2="1201" stroke="#bdbdbd" stroke-width="1" stroke-dasharray="2 1"/>
<line x1="763" y1="211.5" x2="967" y2="211.5" stroke="#bdbdbd" stroke-width="1" stroke-dasharray="2 1"/><line x1="763.5" y1="211" x2="763.5" y2="651" stroke="#bdbdbd" stroke-width="1" stroke-dasharray="2 1"/><line x1="966.5" y1="211" x2="966.5" y2="651" stroke="#bdbdbd" stroke-width="1" stroke-dasharray="2 1"/><line x1="763" y1="650.5" x2="967" y2="650.5" stroke="#bdbdbd" stroke-width="1" stroke-dasharray="2 1"/>
<line x1="763" y1="653.5" x2="967" y2="653.5" stroke="#bdbdbd" stroke-width="1" stroke-dasharray="2 1"/><line x1="763.5" y1="653" x2="763.5" y2="1201" stroke="#bdbdbd" stroke-width="1" stroke-dasharray="2 1"/><line x1="966.5" y1="653" x2="966.5" y2="1201" stroke="#bdbdbd" stroke-width="1" stroke-dasharray="2 1"/>
<line x1="969" y1="211.5" x2="1173" y2="211.5" stroke="#bdbdbd" stroke-width="1" stroke-dasharray="2 1"/><line x1="969.5" y1="211" x2="969.5" y2="651" stroke="#bdbdbd" stroke-width="1" stroke-dasharray="2 1"/><line x1="1172.5" y1="211" x2="1172.5" y2="651" stroke="#bdbdbd" stroke-width="1" stroke-dasharray="2 1"/><line x1="969" y1="650.5" x2="1173" y2="650.5" stroke="#bdbdbd" stroke-width="1" stroke-dasharray="2 1"/>
<line x1="969" y1="653.5" x2="1173" y2="653.5" stroke="#bdbdbd" stroke-width="1" stroke-dasharray="2 1"/><line x1="969.5" y1="653" x2="969.5" y2="1201" stroke="#bdbdbd" stroke-width="1" stroke-dasharray="2 1"/><line x1="1172.5" y1="653" x2="1172.5" y2="1201" stroke="#bdbdbd" stroke-width="1" stroke-dasharray="2 1"/>
</svg>
<div style="position:absolute;left:412px;top:183px;width:700px;height:3px;background:linear-gradient(90deg,rgba(63,111,174,0) 0%,rgba(63,111,174,0.45) 25%,#3d6dad 50%,rgba(63,111,174,0.45) 75%,rgba(63,111,174,0) 100%)"></div>
<div class="a" style="left:292px;width:822px;top:131px;text-align:center;font-size:17px;font-weight:bold;color:#333;letter-spacing:0.95px;padding-left:0.95px">Style Catalog</div>
<div class="a code" style="left:351px;width:204px;top:594px">T1100-W</div>
<div class="a nm" style="left:351px;width:204px;top:626px">Fitting Top</div>
<div class="a code" style="left:557px;width:204px;top:594px">P1100-W</div>
<div class="a nm" style="left:557px;width:204px;top:626px">Fitting Pants</div>
<div class="a code" style="left:763px;width:204px;top:594px">T1111-W</div>
<div class="a nm" style="left:763px;width:204px;top:626px">Cowl Neck Top</div>
<div class="a code" style="left:969px;width:204px;top:594px">T1102-W</div>
<div class="a nm" style="left:969px;width:204px;top:626px">Dress Shirt</div>
<div class="a code" style="left:351px;width:204px;top:1035px">T1106-W</div>
<div class="a nm" style="left:351px;width:204px;top:1068px">Tied Yoke Top</div>
<div class="a code" style="left:557px;width:204px;top:1035px">T1113-W</div>
<div class="a nm" style="left:557px;width:204px;top:1068px">Tailored Blouse</div>
<div class="a code" style="left:763px;width:204px;top:1035px">D1101-W</div>
<div class="a nm" style="left:763px;width:204px;top:1068px">Tie Top Dress</div>
<div class="a code" style="left:969px;width:204px;top:1029px">D1103-W</div>
<div class="a nm" style="left:969px;width:204px;top:1062px">Strapless Dress</div>
<svg style="position:absolute;left:0;top:0" width="1240" height="1200" viewBox="0 0 1240 1200" fill="none" stroke="#2b2b2b" stroke-width="1" stroke-linecap="round" stroke-linejoin="round">
<defs>
 <linearGradient id="gPink" x1="0" y1="0" x2="1" y2="1"><stop offset="0" stop-color="#c47aa8"/><stop offset="0.5" stop-color="#c582a8"/><stop offset="1" stop-color="#b89ad0"/></linearGradient>
 <linearGradient id="gTan" x1="0" y1="0" x2="0.6" y2="1"><stop offset="0" stop-color="#d4a683"/><stop offset="1" stop-color="#b8895e"/></linearGradient>
 <linearGradient id="gTeal" x1="0.7" y1="0.1" x2="0.3" y2="1"><stop offset="0" stop-color="#0fa3bd"/><stop offset="0.45" stop-color="#47b5c8"/><stop offset="1" stop-color="#ffffff"/></linearGradient>
 <linearGradient id="gBlue" x1="0" y1="0.2" x2="1" y2="0.8"><stop offset="0" stop-color="#1e80d6"/><stop offset="0.3" stop-color="#4f9fe2"/><stop offset="0.5" stop-color="#eef6fd"/><stop offset="0.7" stop-color="#4f9fe2"/><stop offset="1" stop-color="#1e80d6"/></linearGradient>
 <linearGradient id="gYel" x1="0" y1="0" x2="1" y2="1"><stop offset="0" stop-color="#f7c283"/><stop offset="1" stop-color="#fff6b8"/></linearGradient>
 <pattern id="pLat" width="7" height="7" patternUnits="userSpaceOnUse"><rect width="7" height="7" fill="#ffffff"/><path d="M0 3.5 Q3.5 0 7 3.5 Q3.5 7 0 3.5 Z" fill="none" stroke="#1fa0b5" stroke-width="0.9"/></pattern>
 <clipPath id="cDress"><path d="M840 731 Q848 745 866 747 Q884 745 891 731 Q895 735 893 742 Q893 780 902 886 Q880 900 860 897 Q840 893 820 893 Q830 820 836 760 Q836 740 840 731 Z"/></clipPath>
 <clipPath id="cShirtA"><path d="M1007.5 282.8 Q1020 278 1030 276 L1060.6 277.3 Q1072 284 1078 294 L1093.6 321 Q1090 336 1078 352 L1062 372 L1058 366 L1070 348 Q1080 332 1078 322 L1066 306 L1061 330 L1061 380 Q1045 388 1029.5 384.5 Q1014 378 1008 362 L1001 380 L989 376 Q996 330 1001 300 Q1003 288 1007.5 282.8 Z"/></clipPath>
 <clipPath id="cShirtB"><path d="M1086 296 Q1105 288 1112 288 Q1125 292 1132 299 Q1140 310 1142 330 L1155 390 L1140 392 L1132 350 L1133 404 Q1110 412 1083 404 L1082 345 L1081 390 L1069 388 Q1075 340 1078 315 Q1080 300 1086 296 Z"/></clipPath>
</defs>

<g stroke-width="0.9">
 <path d="M437 253 C433 243 437 232 447 229 C452 223 460 222 462 227 C468 228 463 235 460 236 M440 238 C446 232 456 232 462 238 C465 244 460 252 452 255 M436 245 C440 255 446 260 452 258 M447 240 C452 246 458 246 463 242 M438 236 L446 262 M441 234 L449 258 M444 262 L442 272 L446 272 Z M465 243 C472 246 476 254 476 262"/>
 <path fill="#444" stroke="none" d="M437 238 Q441 234 444 238 L447 256 Q443 258 440 252 Z" opacity="0.55"/>
 <path d="M642 246 Q646 232 660 230 Q672 232 676 244 M654 228 Q664 226 670 236 M646 240 Q652 234 662 236 M670 234 Q678 240 678 250"/>
 <path d="M817 278 Q826 266 838 276 M818 284 Q826 272 840 282 M824 266 Q830 270 834 268 M820 270 Q828 268 836 272"/>
 <path d="M910 250 Q918 244 923 252 Q925 262 918 266 Q912 262 912 256 M914 254 Q918 250 920 256 M890 248 Q900 240 912 246 M894 252 Q902 246 910 250"/>
 <path d="M1016 236 Q1028 228 1040 236 M1024 230 Q1036 232 1044 244 M1040 240 Q1048 254 1046 266 M1014 246 Q1010 262 1014 276"/>
 <path d="M1092 262 Q1100 252 1112 256 M1096 270 Q1104 262 1116 266 M1104 260 L1110 276 M1100 278 Q1108 272 1118 280"/>
 <path d="M418 700 Q422 680 436 676 Q450 676 456 692 M426 672 Q440 670 452 680"/>
 <path d="M636 686 Q640 670 652 668 Q664 668 668 684 M632 700 Q628 712 624 718 M672 700 Q676 712 680 718 M648 666 L652 684 M656 666 L654 680"/>
 <path d="M852 688 Q848 676 856 670 Q864 664 874 670 M856 680 Q864 674 872 682 M850 692 L856 712 M854 694 L860 712 M876 676 Q884 682 888 694"/>
 <path d="M1020 698 Q1024 682 1036 676 Q1048 676 1054 688 M1024 690 Q1034 684 1046 690"/>
 <path d="M1098 696 Q1102 682 1114 678 Q1126 678 1132 690 M1104 688 Q1114 682 1126 688 M1094 710 Q1090 720 1096 726"/>
</g>
<!-- ===== F1 T1100-W ===== -->
<g>
 <path d="M440 242 C434 232 440 222 451 223 C460 221 467 228 463 238 M444 232 C450 226 458 228 460 236 M438 236 C444 240 448 232 452 238 M446 246 C442 250 444 256 447 258 M441 228 C448 222 455 224 457 230"/>
 <path d="M452 238 C462 232 474 238 476 250 C477 258 476 265 471 271 C466 274 460 272 456 268 C450 262 447 250 452 238"/>
 <path d="M455 266 L453 283 M467 271 L468 282"/>
 <path fill="#f5f0dc" d="M443.5 282 Q458 290 471 281 L480.7 287 Q486 294 487 310 L507.5 386 L495.7 389.3 L475.6 324 Q472 350 474 360 Q477 375 477.3 388 L420.3 388 Q422 372 430 358 Q433 345 430 324 L418.6 386 L398.5 382.6 L417 312 Q418 296 423.6 290.4 Z"/><path d="M423.6 290.4 Q428 305 430 324 M480.7 287 Q476 305 475.6 324"/>
 <path stroke-dasharray="3 2" d="M432 318 L474 318 M436 347 L471 347"/>
 <path d="M445 325 Q447 345 444 362 M462 325 Q460 345 462 360 M418 318 L432 320 M474 320 L489 318"/>
 <path fill="#fff" d="M420 389 L478 389 Q479 425 478 462 Q462 468 447 465 Q430 468 414 462 Q415 420 420 389 Z"/>
 <path d="M424 464 Q420 500 426 525 Q428 545 430 568 M443 466 Q446 500 441 525 Q439 545 441 568 M448 466 Q448 500 451 525 Q452 545 451 568 M472 465 Q474 500 466 530 Q462 550 463 568"/>
 <path d="M428 566 Q425 578 432 584 Q437 580 441 566 M451 566 Q450 580 457 584 Q463 578 463 566"/>
 <path fill="#fff" d="M398.5 383 Q390 389 384 397 Q381 404 385 402 L390 397 Q387 404 390 406 L394 399 Q394 406 397 405 L399 398 Q402 402 404 400 Q407 392 406 386 Z M507.5 386 Q515 391 520 399 Q524 406 520 405 L515 400 Q517 406 514 407 L510 401 Q510 408 507 406 L505 399 Q502 403 500 400 Q497 394 496 389 Z"/>
</g>

<!-- ===== F2 P1100-W ===== -->
<g>
 <path d="M640 250 Q637 236 648 228 Q660 220 672 226 Q682 232 680 246 M648 236 Q658 230 668 240 Q672 246 677 250 M652 232 Q664 236 670 246"/>
 <path d="M645 248 Q644 270 658 277 Q672 270 675 248"/>
 <path d="M649 268 L647 283 M670 268 L672 283 M656 280 L659 276 L662 280"/>
 <path d="M647 283 Q633 285 623 290 Q617 300 617 312 M672 283 Q686 285 694 290 Q700 300 700 312"/>
 <path d="M623 290 Q626 320 630 330 Q636 345 637 348 M694 290 Q690 320 686 330 Q682 345 682 348 M628 325 Q640 332 650 326 M666 326 Q676 332 688 325"/>
 <path d="M617 300 Q612 340 606 368 Q596 390 586 405 M630 330 Q624 360 616 375 Q606 392 596 408 M586 405 Q578 415 580 428 M596 408 Q592 420 594 425 M588 412 Q586 420 588 428"/>
 <path d="M700 300 Q706 340 712 368 Q722 390 733 405 M686 330 Q692 360 700 375 Q710 392 722 408 M733 405 Q740 415 738 428 M722 408 Q726 420 724 425 M730 412 Q732 420 730 428"/>
 <path fill="#f6f2df" d="M636 346 L682 346 L683 352 Q690 370 689 392 Q688 440 686 520 L685 564 L662 564 L659 404 L655 564 L632 564 Q630 500 629 440 Q628 390 630 370 Q635 360 635 352 Z"/>
 <path d="M635 352 L683 352 M659 352 L659 404 M646 356 L645 372 M672 356 L673 372"/>
 <path stroke-dasharray="4 3" d="M630 395 L688 395 M630 402 L688 402 M632 472 L686 472"/>
 <path d="M654 400 L666 405 L656 404"/>
 <path d="M632 564 Q628 575 633 583 L650 583 Q652 572 650 564 M667 564 Q665 574 668 583 L685 583 Q688 575 685 564"/>
</g>

<!-- ===== F3 T1111-W ===== -->
<g>
 <path d="M816 292 Q812 270 826 265 Q840 263 843 285 M818 280 Q826 268 836 278 M822 268 Q830 274 840 272 M820 274 Q828 272 838 282"/>
 <path d="M816 286 Q815 302 828 306 Q840 302 841 286"/>
 <path d="M822 302 L821 312 M836 302 L837 312"/>
 <path fill="url(#gPink)" d="M803 313 L813 308 Q820 330 826.2 341 Q834 330 841.1 309.6 L847.8 314.6 Q851 318 852 325 L869.3 400.6 L860.2 403.9 L844.4 344.3 Q845 370 849.4 394 Q827 397 804.7 394 Q807 370 808 347.6 L788.2 403.9 L781.6 400.6 L798 330 Q800 318 803 313 Z"/>
 <path d="M815 310 Q820 328 826.2 344 Q834 332 839 311 M818 312 Q823 326 826 334 Q832 326 836 312"/>
 <path fill="#fff" d="M805 396 L849 395 Q850 470 847 550 L824 550 Q824 480 824 423 Q812 480 797 541 L775 537 Q790 470 805 396 Z"/>
 <path d="M816 416 L830 412 L818 420 L832 418"/>
 <path fill="#fff" d="M775 537 Q766 546 769 556 L790 552 Q796 546 797 541 Z M826 550 Q824 562 827 575 L839 575 Q842 562 841 550 Z"/><path d="M776 545 L786 541 M778 549 L788 545 M828 556 L838 556 M828 562 L838 562 M828 568 L838 568"/>
 <path d="M782 398 Q772 405 768 420 M788 402 Q782 412 782 424 M792 402 Q790 414 792 420 M862 403 Q870 410 878 420 M858 404 Q862 414 866 422"/>
 <path d="M903 238 Q890 240 888.4 251 Q888 262 886.5 268.5 Q889 270 889.5 273 Q892 279 897 280 M903 238 Q916 238 920 250 Q921 262 914 272 L912 274"/><circle cx="918" cy="258" r="6"/><circle cx="918" cy="258" r="3"/>
 <path d="M892 244 Q902 240 912 250 M896 250 Q904 246 910 256"/>
 <path d="M897.3 280 L896.5 288 M912 272.3 L916 284"/>
 <path fill="url(#gTan)" d="M884.5 291 L896.3 285 Q902 306 906 316.5 Q914 306 918 287 L927.7 289 Q934 296 933.6 308.6 L951.3 377.4 L941.5 381.4 L923.8 316.5 Q924 340 925.8 367.6 Q927 400 927.7 438.4 Q916 443 904 442.3 Q890 441 876.6 436.4 Q880 395 884.5 357.8 Q888 335 890.4 318.5 L874.7 381.4 L864.8 377.4 L880.6 308.6 Q881 297 884.5 291 Z"/>
 <path d="M896.3 285 Q900 312 906 321 Q913 312 918 287 M899 291 Q903 310 906 315 Q913 306 916 290 M901 325 L913 327"/>
 <path d="M889 441 Q892 480 900 500 Q906 520 898 532 M912 442 Q910 480 902 505 Q895 525 910 530 M900 441 Q902 470 907 490"/>
 <path fill="#fff" d="M888 528 Q886 540 895 541 Q905 536 902 528 Z M902 515 Q904 528 913 526 Q914 520 911 512 Z"/>
 <path fill="#fff" d="M943.5 380.5 Q952 384 958 392 Q964 400 960 400 L954 394 Q956 402 952 401 L948 394 Q946 392 944 386 Z"/><path d="M866 381 Q864 390 868 396 M872 382 Q870 390 874 396"/>
</g>

<!-- ===== F4 T1102-W ===== -->
<g>
<path d="M1090 268 Q1086 250 1096 246 Q1112 240 1122 252 Q1126 268 1118 282 Q1105 290 1095 280 Z M1094 256 Q1104 248 1116 258 M1098 266 Q1106 258 1114 268 M1100 274 Q1108 268 1116 276 M1104 252 Q1110 262 1106 272 M1088 262 Q1086 272 1090 282 M1122 258 Q1126 270 1122 284"/>
 <path fill="#8ea2d8" d="M1086 296 Q1105 288 1112 288 Q1125 292 1132 299 Q1140 310 1142 330 L1155 390 L1140 392 L1132 350 L1133 404 Q1110 412 1083 404 L1082 345 L1081 390 L1069 388 Q1075 340 1078 315 Q1080 300 1086 296 Z"/>
 <g clip-path="url(#cShirtB)" stroke="none">
  <rect x="1090" y="300" width="18" height="20" fill="#6e8bcd"/><rect x="1112" y="310" width="18" height="18" fill="#b0c0ea"/><rect x="1086" y="340" width="16" height="22" fill="#a8b6e6"/><rect x="1110" y="350" width="20" height="20" fill="#7590d2"/><rect x="1095" y="378" width="18" height="20" fill="#7a93d3"/><rect x="1136" y="330" width="12" height="20" fill="#a9b7e6"/>
 </g>
 <path d="M1086 296 Q1105 288 1112 288 Q1125 292 1132 299 Q1140 310 1142 330 L1155 390 L1140 392 L1132 350 L1133 404 Q1110 412 1083 404 L1082 345 L1081 390 L1069 388 Q1075 340 1078 315 Q1080 300 1086 296 Z"/>
 <path d="M1090 312 L1130 315 M1108 315 L1108 404 M1102 315 L1106 404 M1139 382 L1152 380"/>
 <path fill="#fff" d="M1083 404 Q1110 410 1133 404 Q1138 470 1130 530 L1127 553 L1102 553 Q1105 500 1108 460 Q1100 500 1096 553 L1085 553 Q1080 470 1083 404 Z"/>
 <path d="M1098 553 L1096 570 L1108 566 M1115 553 L1118 568 L1126 566 M1090 420 L1092 470 M1116 460 L1114 475"/>
 <path d="M1150 392 Q1160 400 1168 412 M1146 393 Q1152 404 1154 410 M1156 394 Q1164 402 1166 410"/>
<path fill="#fff" d="M1006 360 Q1030 368 1062 360 Q1063 450 1055 525 L1051 563 L1030 568 Q1028 510 1027 450 Q1020 510 1018 565 L1002 562 Q997 480 1006 360 Z"/>
 <path fill="#a3acdf" d="M1007.5 282.8 Q1020 278 1030 276 L1060.6 277.3 Q1072 284 1078 294 L1093.6 321 Q1090 336 1078 352 L1062 372 L1058 366 L1070 348 Q1080 332 1078 322 L1066 306 L1061 330 L1061 380 Q1045 388 1029.5 384.5 Q1014 378 1008 362 L1001 380 L989 376 Q996 330 1001 300 Q1003 288 1007.5 282.8 Z"/>
 <g clip-path="url(#cShirtA)" stroke="none">
  <rect x="1032" y="270" width="40" height="120" fill="#7d9ddb"/><rect x="1033" y="270" width="6" height="120" fill="#8f96d4"/>
  <rect x="1012" y="290" width="10" height="12" fill="#b7bfe9"/><rect x="1018" y="318" width="10" height="14" fill="#bcc3ec"/><rect x="1006" y="340" width="12" height="14" fill="#9aa4dc"/><rect x="1020" y="352" width="10" height="12" fill="#b5bbe7"/><rect x="992" y="350" width="10" height="14" fill="#8d9bd8"/>
  <rect x="1044" y="288" width="10" height="10" fill="#a8c2ec"/><rect x="1050" y="320" width="10" height="14" fill="#6c8fd3"/><rect x="1040" y="346" width="12" height="12" fill="#a0b4e6"/><rect x="1066" y="300" width="14" height="12" fill="#9aa6e0"/><rect x="1072" y="322" width="12" height="16" fill="#8aa0dc"/><rect x="1046" y="366" width="12" height="14" fill="#7294d6"/>
 </g>
 <path d="M1007.5 282.8 Q1020 278 1030 276 L1060.6 277.3 Q1072 284 1078 294 L1093.6 321 Q1090 336 1078 352 L1062 372 L1058 366 L1070 348 Q1080 332 1078 322 L1066 306 L1061 330 L1061 380 Q1045 388 1029.5 384.5 Q1014 378 1008 362 L1001 380 L989 376 Q996 330 1001 300 Q1003 288 1007.5 282.8 Z"/>
 <path d="M1039 280 L1036 386 M1046 300 L1058 300 L1058 313 L1046 313 Z M1039 272 L1047 278 L1044 284 M990 368 L1003 370 M1062 304 L1061 378"/>
 <path d="M1032 568 Q1033 580 1043 576 Q1050 568 1051 560 M1008 520 L1008 545 M1046 500 L1044 512"/>
<path d="M1010 272 Q1004 246 1016 234 Q1028 224 1042 230 Q1052 240 1050 262 M1016 242 Q1030 230 1046 250 M1020 226 Q1030 220 1040 226 M1036 226 Q1046 238 1049 262 M1013 252 Q1010 268 1016 280 M1042 250 Q1046 262 1044 272"/>
 <path d="M1015 250 Q1014 270 1028 278 Q1040 276 1044 262"/>
 <path d="M988 378 Q980 388 973 400 M994 380 Q990 392 990 402 M984 382 Q978 395 978 402 M1060 356 Q1068 352 1078 358 M1062 364 Q1070 360 1080 366"/>
</g>

<!-- ===== F5 T1106-W ===== -->
<g>
 <path d="M418 712 Q414 690 418 672 Q428 662 448 665 Q458 672 456 690 M428 668 Q446 674 456 690 Q462 698 468 701 M440 668 Q452 676 458 690 M418 706 Q414 714 418 720 M454 695 Q458 708 456 716"/>
 <path d="M420.4 690 Q420 712 434.4 715.4 Q446 712 448.5 692"/>
 <path d="M426.4 713 L420.4 725.4 M446.5 713 L454.5 723.4 M430 732 Q434 736 438 732"/>
 <path fill="url(#gTeal)" d="M428 745 Q435 748 442 745 Q458 746 464.6 752 L469.6 830 Q471 845 471.6 856 Q450 852 420.4 854 Q400 848 386 842 Q392 830 394 815 Q400 790 404.3 770 L404.3 753.6 Q414 746 428 745 Z"/>
 <path fill="url(#pLat)" d="M412.3 726.4 Q418 738 428 745 Q414 746 404.3 753.6 L390.2 797 L372 783.7 Q378 750 392.2 731.4 Z M458.6 724.4 L472.7 729.4 Q480 740 480.7 755.6 L485.7 820 L468.6 822 L464.6 752 Q458 746 442 745 Q452 736 458.6 724.4 Z"/>
 <path d="M412.3 726.4 Q420 735 434.4 739.5 Q448 735 458.6 724.4 M372 783.7 L390.2 797 M468.6 822 L485.7 820"/>
 <path stroke="#333" d="M420 738 L433 744 L427 752 L436 744 M450 737 L438 744 L444 752 L437 744 M424 742 L432 748 M446 742 L440 748"/>
 <path fill="#0fa3bd" stroke="none" d="M433.4 738.5 H438.5 V743.5 H433.4 Z"/>
 <path d="M412 781 Q408 790 405 800 M415 777 Q410 790 409 804"/>
 <path fill="#fff" d="M396 848 Q430 858 471.6 856 Q478 870 485 895 Q500 950 518 1010 L478 1015 L470 980 Q455 930 442 880 Q440 950 440 1015 L395 1015 Q398 970 396 848 Z"/>
 <path d="M405 870 L406 885 M412 940 L412 968 M478 925 L479 935"/>
 <path d="M405 1015 L402 1026 L430 1026 L432 1015 M480 1015 L485 1025 L515 1022 L515 1010"/>
 <path d="M376 790 Q382 805 394 818 Q404 826 414 824 Q418 818 412 814 Q404 812 398 814 M390 797 Q396 808 404 812"/>
 <path d="M469.6 822 Q472 850 474 870 Q476 878 480 876 Q484 860 485.7 822"/>
</g>
<!-- ===== F6 T1113-W ===== -->
<g>
 <path d="M612 720 Q620 700 630 690 Q632 670 645 665 Q668 662 676 685 Q680 705 690 720 M636 690 Q632 710 618 718 M670 690 Q674 710 684 718 M645 668 Q655 672 660 684 M612 716 Q608 722 614 724 M688 718 Q692 724 686 726"/>
 <path d="M640 680 Q638 702 652 709 Q664 702 664 680"/>
 <path d="M645 705 L644 718 M660 705 L662 718"/>
 <path fill="url(#gBlue)" d="M619 725 Q632 718 643 718 L652 740 L662 718 Q672 720 676 727 Q690 740 694 775 Q685 790 672 804 L664 800 Q674 785 668 765 L664 786 Q640 790 622 784 L622 760 L620 810 L600 812 Q596 790 598 770 Q604 740 619 725 Z"/>
 <path d="M643 718 L636 735 L650 742 M662 718 L668 735 L655 742 M652 740 L648 786 M625 760 Q632 770 638 764 M668 765 Q662 772 656 766 M600 806 L620 804"/>
 <circle cx="649" cy="752" r="1.3"/><circle cx="649" cy="764" r="1.3"/><circle cx="648" cy="776" r="1.3"/><circle cx="647" cy="785" r="1.3"/>
 <path fill="#fff" d="M624 786 L664 786 Q668 800 672 830 Q700 930 713 1002 L690 1005 Q670 920 653 830 Q648 900 648 1003 L612 1003 Q612 920 614 840 Q618 810 624 786 Z"/>
 <path d="M624 792 L664 792 M642 792 L643 830" stroke-dasharray="1 2"/>
 <path d="M634 834 Q645 828 658 836"/>
 <path fill="#fff" d="M624 1003 Q620 1020 630 1025 Q637 1018 637 1003 Z M691 1005 L694 1026 L722 1027 Q712 1015 712 1003 Z"/>
 <path d="M604 812 Q608 830 616 845 Q618 850 620 846 M612 814 Q620 824 622 838 M616 824 Q622 828 624 826"/>
</g>

<!-- ===== F7 D1101-W ===== -->
<g>
 <path d="M852 690 Q846 672 860 668 Q878 662 888 680 Q892 700 884 712 M855 675 Q865 668 875 680 M858 668 Q864 660 872 664 M850 682 Q856 690 854 700 M858 704 L856 718"/>
 <path d="M858 690 Q856 712 872 717 Q886 710 888 692"/>
 <path d="M862 712 L860 728 M878 714 L880 728 M862 733 Q866 736 870 733"/>
 <path fill="#fff" d="M840 731 Q848 745 866 747 Q884 745 891 731 Q895 735 893 742 Q893 780 902 886 Q880 900 860 897 Q840 893 820 893 Q830 820 836 760 Q836 740 840 731 Z"/>
 <g clip-path="url(#cDress)" stroke="none">
  <circle cx="868.5" cy="764" r="16.7" fill="#cfe5d9"/><circle cx="843" cy="742" r="6" fill="#f3f0b5"/><circle cx="848" cy="769" r="8" fill="#d6e7f4"/>
  <circle cx="848.4" cy="797.4" r="10.5" fill="#f8d3b3"/><circle cx="880.3" cy="799" r="11.7" fill="#f6f2b9"/><circle cx="883.6" cy="812.5" r="10" fill="#dedba1"/>
  <circle cx="843.4" cy="824.2" r="11.7" fill="#d5e7f5"/><circle cx="868.5" cy="847.7" r="16.7" fill="#d8e9f6"/><circle cx="888.6" cy="846" r="11.7" fill="#f8d2b2"/>
  <circle cx="840" cy="857.7" r="12.7" fill="#f8d1b1"/><circle cx="836.7" cy="881.2" r="11.7" fill="#f4f0b6"/><circle cx="832" cy="888" r="8" fill="#dedba0"/><circle cx="861.8" cy="886.2" r="10" fill="#f6f2b8"/><circle cx="881.9" cy="881.2" r="16.7" fill="#cfe5d9"/><circle cx="890" cy="737" r="5" fill="#f3f0b5"/>
 </g>
 <path d="M840 731 Q848 745 866 747 Q884 745 891 731 Q895 735 893 742 Q893 780 902 886 Q880 900 860 897 Q840 893 820 893 Q830 820 836 760 Q836 740 840 731 Z"/>
 <path d="M846 780 L843 793 M862 822 L862 886 M836 845 L832 878"/>
 <path d="M837 742 Q826 780 818 820 Q812 832 800 845 M842 760 Q838 790 826 825 Q822 835 818 845 M806 838 Q800 845 798 848 M812 840 Q810 848 808 852"/>
 <path d="M893 742 Q900 780 912 820 Q920 832 932 845 M890 770 Q900 800 908 826 Q912 836 916 845 M924 836 Q930 842 934 850 M916 842 Q920 848 922 854"/>
 <path d="M842 897 Q842 930 850 960 Q853 985 856 1015 M860 898 Q862 930 860 960 Q860 990 866 1020 M866 898 Q868 940 864 970 M880 897 Q878 930 872 960 Q868 975 878 990"/>
 <path fill="#fff" d="M854 1008 Q850 1022 860 1024 Q868 1020 867 1008 Z M866 968 Q868 985 878 990 Q882 985 878 975 Z"/>
</g>

<!-- ===== F8 D1103-W ===== -->
<g>
 <path d="M1016 700 Q1014 680 1030 672 Q1048 668 1056 684 Q1058 706 1046 717 Q1030 720 1020 712 Z"/>
 <path d="M1067 747 Q1075 720 1084.6 688.8 Q1084 680 1078 680 Q1055 682 1031 683 Q1016 680 1012 688 Q1018 694 1031 694 Q1050 692 1072 694 Q1066 712 1060 738 M1004 718 Q994 728 1002 738 M1050 705 Q1060 714 1056 728 M996 728 Q990 736 994 742"/>
 <path d="M1030 718 L1028 730 M1046 717 L1050 730"/>
 <path fill="url(#gYel)" d="M1019.8 739 L1067 747 Q1064 770 1061 783.4 Q1058 790 1058 792 Q1068 830 1075.3 871.8 Q1056 876 1037 878 Q1018 880 999.3 878 Q996 850 996.2 820 Q998 800 1006 790 Q1013 780 1014.7 775 Q1016 755 1019.8 739 Z"/>
 <path d="M1020.8 740 Q1014 780 1012.6 785.4 Q1014 830 1018.8 878 M1045.5 741 Q1044 770 1044.5 789.5 Q1050 830 1060 874 M1012.6 785.4 Q1035 789 1057.9 790.6 M1029 760 Q1034 756 1040 762"/>
 <path d="M1019 745 Q1004 748 990 757 Q986 770 992 781 Q998 790 1008 790 M1019 760 Q1004 764 998 770 Q998 778 1004 784 M1006 782 L1016 780 M1006 786 L1015 786"/>
 <path d="M1002 880 Q1000 940 1006 985 M1020 880 Q1020 940 1018 990 M1054 880 Q1070 920 1072 945"/>
 <path fill="#fff" d="M1004 985 Q1002 995 1012 995 Q1020 990 1018 982 Z"/>
 <path d="M1097 700 Q1094 680 1110 676 Q1130 672 1136 690 Q1138 708 1128 718 Q1112 722 1102 712 Z M1098 690 Q1090 700 1094 714 M1092 705 Q1086 716 1094 722"/>
 <path d="M1136 692 Q1150 695 1160 705 Q1170 715 1164 722 Q1155 726 1136 722 M1108 716 L1106 728 M1124 716 L1126 728 M1138 700 Q1146 706 1150 712"/>
 <path fill="#8ea8c2" d="M1092 736 Q1112 730 1135 735 Q1139 768 1141 800 Q1144 840 1146 870 Q1148 900 1152 925 Q1158 948 1162 965 Q1167 982 1171 997 Q1165 1006 1155 1004 Q1145 1010 1135 1006 Q1120 1012 1105 1007 Q1090 1012 1075 1006 Q1062 1010 1050 1004 Q1056 984 1062 965 Q1070 945 1078 925 Q1080 900 1082 870 Q1084 840 1086 800 Q1088 768 1092 736 Z"/>
 <path d="M1103 738 Q1098 800 1096 880 Q1094 940 1080 1004 M1125 738 Q1130 800 1132 880 Q1136 940 1148 1004 M1076 925 L1066 995 M1152 925 L1160 995 M1098 925 L1098 1000 M1132 925 L1134 1000"/>
 <path d="M1090 740 Q1080 760 1078 790 Q1078 810 1084 822 M1096 760 Q1088 790 1090 820 M1082 822 Q1086 826 1090 822"/>
 <path fill="#fff" d="M1082 1005 Q1078 1020 1086 1024 Q1094 1020 1094 1005 Z"/>
</g>
</svg>

</div></div>
<div style="position:absolute;left:1193px;top:95px;width:21px;height:997px;background:#f0f0f0"></div>
<div style="position:absolute;left:1194px;top:129px;width:19px;height:264px;background:#cdcdcd"></div>
<svg style="position:absolute;left:1193px;top:95px" width="21" height="997" viewBox="0 0 21 997"><path d="M10.4 14.9 L18.25 22.4 L18.25 27.5 L10.4 19.7 L2.6 27.5 L2.6 22.4 Z" fill="#606060"/><path d="M2.2 969 L2.2 973.6 L10.5 981.7 L18.5 973.6 L18.5 969 L10.5 976.9 Z" fill="#606060"/></svg>
</body></html>
